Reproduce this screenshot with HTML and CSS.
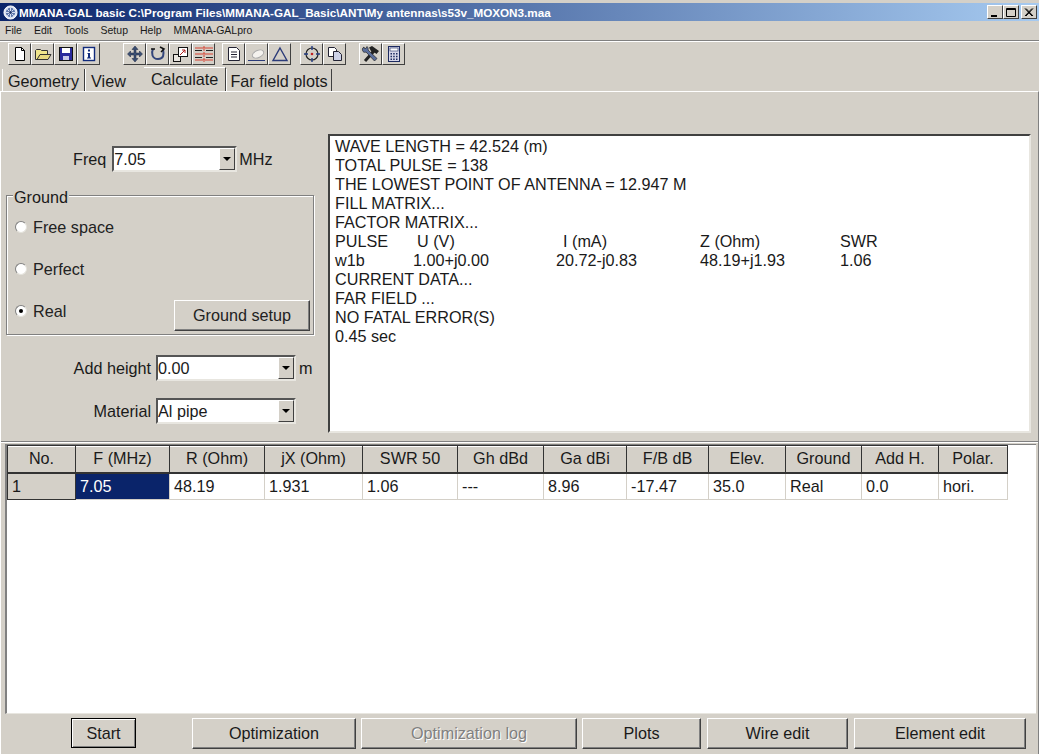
FILE: index.html
```html
<!DOCTYPE html>
<html lang="en">
<head>
<meta charset="UTF-8">
<title>MMANA-GAL basic</title>
<link rel="stylesheet" href="styles.css">
</head>
<body>
<div class="window">
    <div class="titlebar">
        <svg class="app-icon" width="15" height="15" viewBox="0 0 16 16"><circle cx="8" cy="8" r="7" fill="#dfe6f5" stroke="#fff"/><circle cx="8" cy="8" r="5" fill="#5f78ad"/><path d="M8 3v10M3 8h10M4.500 4.500l7 7M11.500 4.500l-7 7" stroke="#dfe6f5"/><circle cx="8" cy="8" r="1.500" fill="#22386e"/></svg>
        <span class="title-text">MMANA-GAL basic C:\Program Files\MMANA-GAL_Basic\ANT\My antennas\s53v_MOXON3.maa</span>
        <div class="caption-btns">
            <div class="caption-btn"><svg width="12" height="11" viewBox="0 0 12 11"><rect x="2" y="8" width="6" height="2" fill="#000"/></svg></div>
            <div class="caption-btn"><svg width="12" height="11" viewBox="0 0 12 11"><path d="M1.500 1.500h9v8h-9z M1 2.500h10" fill="none" stroke="#000"/></svg></div>
            <div class="caption-btn close"><svg width="12" height="11" viewBox="0 0 12 11"><path d="M2 1.500l7 7.500M3 1.500l7 7.500M9 1.500l-7 7.500M10 1.500l-7 7.500" fill="none" stroke="#000"/></svg></div>
        </div>
    </div>
    <div class="menubar">
        <span>File</span><span>Edit</span><span>Tools</span><span>Setup</span><span>Help</span><span>MMANA-GALpro</span>
    </div>
    <div class="toolbar">
        <div class="tool-group">
            <div class="tool"><svg width="16" height="16" viewBox="0 0 16 16"><path d="M3.500 1.500h6l3 3v10h-9z" fill="#fff" stroke="#000"/><path d="M9.500 1.500v3h3" fill="none" stroke="#000"/></svg></div>
            <div class="tool"><svg width="18" height="16" viewBox="0 0 18 16"><path d="M1.500 13.500v-9l1-1h4l1 1h6v9z" fill="#f0e68c" stroke="#333"/><path d="M3 13.500l3-5h11l-3 5z" fill="#e8da80" stroke="#333"/></svg></div>
            <div class="tool"><svg width="16" height="16" viewBox="0 0 16 16"><rect x="1.500" y="1.500" width="13" height="13" fill="#2a2a9c" stroke="#111"/><rect x="4" y="2" width="8" height="5" fill="#fff"/><rect x="5" y="10" width="6" height="4" fill="#c9c9e8"/></svg></div>
            <div class="tool"><svg width="16" height="16" viewBox="0 0 16 16"><rect x="2.500" y="1.500" width="11" height="13" fill="#fff" stroke="#102a7c" stroke-width="1.400"/><path d="M7 3.500h2v2H7zM6.500 7h2.500v4.500h1v1h-4v-1h1v-3.500h-.5z" fill="#102a7c"/></svg></div>
        </div>
        <div class="tool-group g-view">
            <div class="tool"><svg width="18" height="18" viewBox="0 0 18 18"><path d="M9 1l3 3.500h-2v3.500h3.500V6l3 3-3 3v-2H10v3.500h2L9 17l-3-3.500h2V10H4.500v2l-3-3 3-3v2H8V4.500H6z" fill="#3b4f73" stroke="#1b2540" stroke-width=".5"/></svg></div>
            <div class="tool"><svg width="18" height="16" viewBox="0 0 18 16"><path d="M4 3c-2 4-1 10 5 10s6-5 5-10" fill="none" stroke="#34467c" stroke-width="2"/><path d="M11 1l4 2-3 3" fill="none" stroke="#111" stroke-width="1.500"/><path d="M2 3h4" stroke="#111" stroke-width="1.500"/></svg></div>
            <div class="tool"><svg width="18" height="18" viewBox="0 0 18 18"><rect x="1.500" y="9.500" width="7" height="7" fill="#e8e4de" stroke="#111"/><rect x="6.500" y="2.500" width="9" height="9" fill="#fff" stroke="#111"/><path d="M8 10l5-5M10 5h3v3" fill="none" stroke="#b02020"/></svg></div>
            <div class="tool"><svg width="20" height="18" viewBox="0 0 20 18"><path d="M1 3h18M1 9h18M1 15h18" stroke="#d84030"/><path d="M1 5.500h7M12 5.500h7M1 12.500h7M12 12.500h7" stroke="#222"/><path d="M10 1v16" stroke="#d84030" stroke-dasharray="2 1"/></svg></div>
        </div>
        <div class="tool-group g-sheet">
            <div class="tool"><svg width="16" height="16" viewBox="0 0 16 16"><path d="M2.500 1.500h8l3 3v10h-11z" fill="#fff" stroke="#223"/><path d="M5 6h6M5 8.500h6M5 11h6" stroke="#223"/></svg></div>
            <div class="tool"><svg width="20" height="16" viewBox="0 0 20 16"><ellipse cx="11" cy="8" rx="6" ry="3.500" fill="#f4f2ee" stroke="#aaa" transform="rotate(-25 11 8)"/><path d="M1 14.500h17" stroke="#2a3a78"/></svg></div>
            <div class="tool"><svg width="18" height="16" viewBox="0 0 18 16"><path d="M9 2l7 12.500H2z" fill="none" stroke="#2a3a78" stroke-width="1.400"/></svg></div>
        </div>
        <div class="tool-group g-target">
            <div class="tool"><svg width="18" height="18" viewBox="0 0 18 18"><circle cx="9" cy="9" r="6" fill="none" stroke="#222" stroke-width="1.200"/><path d="M9 1v4M9 13v4M1 9h4M13 9h4" stroke="#223a80" stroke-width="1.400"/><circle cx="9" cy="9" r="1.300" fill="#c02020"/></svg></div>
            <div class="tool"><svg width="16" height="16" viewBox="0 0 16 16"><path d="M1.500 1.500h6l2 2v7h-8z" fill="#fff" stroke="#223"/><path d="M6.500 5.500h5l3 3v6h-8z" fill="#cdd2e8" stroke="#223"/></svg></div>
        </div>
        <div class="tool-group g-util">
            <div class="tool"><svg width="20" height="18" viewBox="0 0 20 18"><path d="M4 16L13 6" stroke="#222" stroke-width="3"/><path d="M8 2.500l3-1.500 7 5-2.500 3-3.500-2.500-1.500.5z" fill="#222"/><path d="M3 2c-2 1-2 3-1 4.500 1 1 2 1 3 .5l8.500 9 2.500-2.500L7 5c.5-1 0-2.500-1-3.500l-1 2-2-.5z" fill="#5c6f9c" stroke="#222" stroke-width=".7"/></svg></div>
            <div class="tool"><svg width="16" height="18" viewBox="0 0 16 18"><rect x="2.500" y="1.500" width="11" height="15" fill="#d6d6e8" stroke="#1c2a60"/><rect x="4" y="3" width="8" height="3" fill="#fff" stroke="#1c2a60" stroke-width=".6"/><path d="M4.500 8h1.500v1.500H4.500zM7.200 8h1.500v1.500H7.200zM10 8h1.500v1.500H10zM4.500 10.700h1.500v1.500H4.500zM7.200 10.700h1.500v1.500H7.200zM10 10.700h1.500v1.500H10zM4.500 13.400h1.500v1.500H4.500zM7.200 13.400h1.500v1.500H7.200zM10 13.400h1.500v1.500H10z" fill="#1c2a60"/></svg></div>
        </div>
    </div>
    <div class="tabs">
        <div class="tab">Geometry</div>
        <div class="tab view">View</div>
        <div class="tab active">Calculate</div>
        <div class="tab far">Far field plots</div>
    </div>

    <div class="page">
        <div class="top-pane">
            <div class="left-pane">
                <div class="field-row freq-row">
                    <span>Freq</span>
                    <div class="combo freq"><span class="combo-val">7.05</span><div class="combo-arrow"></div></div>
                    <span>MHz</span>
                </div>
                <div class="ground-box">
                    <div class="ground-legend">Ground</div>
                    <div class="radio-row"><span class="radio"></span>Free space</div>
                    <div class="radio-row"><span class="radio"></span>Perfect</div>
                    <div class="radio-row real"><span class="radio checked"></span>Real<div class="btn ground-btn">Ground setup</div></div>
                </div>
                <div class="field-row height-row">
                    <span class="field-label">Add height</span>
                    <div class="combo wide"><span class="combo-val">0.00</span><div class="combo-arrow"></div></div>
                    <span>m</span>
                </div>
                <div class="field-row material-row">
                    <span class="field-label">Material</span>
                    <div class="combo wide"><span class="combo-val">Al pipe</span><div class="combo-arrow"></div></div>
                </div>
            </div>
            <div class="memo">
                <div>WAVE LENGTH = 42.524 (m)</div>
                <div>TOTAL PULSE = 138</div>
                <div>THE LOWEST POINT OF ANTENNA = 12.947 M</div>
                <div>FILL MATRIX...</div>
                <div>FACTOR MATRIX...</div>
                <div class="memo-cols"><span>PULSE</span><span class="head-u">U (V)</span><span class="head-i">I (mA)</span><span>Z (Ohm)</span><span>SWR</span></div>
                <div class="memo-cols"><span>w1b</span><span>1.00+j0.00</span><span>20.72-j0.83</span><span>48.19+j1.93</span><span>1.06</span></div>
                <div>CURRENT DATA...</div>
                <div>FAR FIELD ...</div>
                <div>NO FATAL ERROR(S)</div>
                <div>0.45 sec</div>
            </div>
        </div>

        <div class="grid-wrap">
            <table class="grid">
                <colgroup>
                    <col class="c-no"><col class="c-f"><col class="c-r"><col class="c-jx"><col class="c-swr"><col class="c-gh"><col class="c-ga"><col class="c-fb"><col class="c-el"><col class="c-gr"><col class="c-add"><col class="c-pol">
                </colgroup>
                <tr>
                    <th>No.</th><th>F (MHz)</th><th>R (Ohm)</th><th>jX (Ohm)</th><th>SWR 50</th><th>Gh dBd</th><th>Ga dBi</th><th>F/B dB</th><th>Elev.</th><th>Ground</th><th>Add H.</th><th>Polar.</th>
                </tr>
                <tr>
                    <td class="row-head">1</td><td class="selected">7.05</td><td>48.19</td><td>1.931</td><td>1.06</td><td>---</td><td>8.96</td><td>-17.47</td><td>35.0</td><td>Real</td><td>0.0</td><td>hori.</td>
                </tr>
            </table>
        </div>

        <div class="bottom-bar">
            <div class="btn start">Start</div>
            <div class="btn optim">Optimization</div>
            <div class="btn optlog disabled">Optimization log</div>
            <div class="btn plots">Plots</div>
            <div class="btn wire">Wire edit</div>
            <div class="btn element">Element edit</div>
        </div>
    </div>
</div>
</body>
</html>
```

FILE: styles.css
```css
* {
    box-sizing: border-box;
}
html, body {
    margin: 0;
    padding: 0;
    height: 100%;
    overflow: hidden;
}
body {
    font-family: "Liberation Sans", Arial, sans-serif;
    font-size: 16.2px;
    color: #1a1a1a;
    background-color: #d4d0c8;
}
.window {
    width: 1039px;
    height: 754px;
    padding-top: 3px;
    display: flex;
    flex-direction: column;
}
.titlebar {
    height: 18px;
    flex: none;
    display: flex;
    align-items: center;
    padding: 0 2px 0 3px;
    background: linear-gradient(to right, #0a246a, #a6caf0);
    color: #fff;
    font-size: 11.7px;
    font-weight: bold;
}
.app-icon {
    margin-right: 1px;
}
.title-text {
    flex: 1;
    white-space: nowrap;
}
.caption-btns {
    display: flex;
}
.caption-btn {
    width: 16px;
    height: 14px;
    background-color: #d4d0c8;
    border: 1px solid;
    border-color: #fff #404040 #404040 #fff;
    display: flex;
    align-items: center;
    justify-content: center;
}
.caption-btn.close {
    margin-left: 2px;
}
.menubar {
    height: 18px;
    flex: none;
    display: flex;
    align-items: center;
    padding-left: 5px;
    gap: 12px;
    font-size: 10.5px;
}
.toolbar {
    height: 27px;
    flex: none;
    display: flex;
    align-items: center;
    padding-left: 8px;
    border-top: 1px solid #808080;
    box-shadow: inset 0 1px 0 #fff;
    margin-top: 1px;
}
.tool-group {
    display: flex;
}
.g-view {
    margin-left: 23px;
}
.g-sheet {
    margin-left: 7px;
}
.g-target {
    margin-left: 9px;
}
.g-util {
    margin-left: 13px;
}
.tool {
    width: 23px;
    height: 22px;
    display: flex;
    align-items: center;
    justify-content: center;
    border: 1px solid;
    border-color: #fff #404040 #404040 #fff;
}
.tabs {
    height: 24px;
    flex: none;
    display: flex;
    align-items: flex-end;
    padding-left: 2px;
}
.tab {
    height: 22px;
    padding: 0 5px;
    line-height: 25px;
    border-left: 1px solid #fff;
    border-right: 1px solid #404040;
    white-space: nowrap;
}
.tab.view {
    padding-right: 18px;
    border-right: 0;
}
.tab.active {
    height: 24px;
    line-height: 22px;
    padding: 0 7px;
    border-left: 0;
    border-right: 1px solid #404040;
    border-top: 1px solid #fff;
}
.tab.far {
    padding: 0 3px;
}
.page {
    flex: 1;
    display: flex;
    flex-direction: column;
    border-top: 1px solid #fff;
    border-left: 1px solid #fff;
    border-right: 1px solid #808080;
    min-height: 0;
}
.top-pane {
    height: 350px;
    flex: none;
    display: flex;
    padding: 42px 0 10px 5px;
    border-bottom: 1px solid #808080;
    box-shadow: 0 1px 0 #fff;
}
.left-pane {
    width: 322px;
    flex: none;
}
.field-row {
    display: flex;
    align-items: center;
    height: 26px;
    gap: 3px;
}
.freq-row {
    margin-top: 12px;
    padding-left: 67px;
    gap: 2px;
}
.height-row {
    margin-top: 20px;
}
.material-row {
    margin-top: 17px;
}
.field-label {
    width: 147px;
    text-align: right;
    padding-right: 2px;
}
.combo {
    height: 26px;
    background-color: #fff;
    border: 2px solid;
    border-color: #555 #e8e6e0 #e8e6e0 #555;
    display: flex;
    align-items: center;
    justify-content: space-between;
}
.combo.freq {
    width: 125px;
    margin-left: 4px;
}
.combo.wide {
    width: 140px;
}
.combo-arrow {
    width: 16px;
    height: 22px;
    background-color: #d4d0c8;
    border: 1px solid;
    border-color: #fff #404040 #404040 #fff;
    position: relative;
}
.combo-arrow::after {
    content: "";
    position: absolute;
    left: 3px;
    top: 8px;
    border-left: 4px solid transparent;
    border-right: 4px solid transparent;
    border-top: 4px solid #000;
}
.ground-box {
    width: 308px;
    height: 140px;
    margin-top: 23px;
    padding: 10px 0 0 8px;
    border: 1px solid #808080;
    box-shadow: 1px 1px 0 #fff, inset 1px 1px 0 #fff;
    position: relative;
}
.ground-legend {
    position: absolute;
    left: 6px;
    top: -8px;
    padding: 0 1px;
    background-color: #d4d0c8;
    line-height: 18px;
}
.radio-row {
    height: 42px;
    display: flex;
    align-items: center;
    gap: 6px;
    color: #222;
}
.radio-row.real {
    position: relative;
}
.radio {
    width: 12px;
    height: 12px;
    border-radius: 50%;
    background-color: #fff;
    border: 1px solid #808080;
    border-right-color: #e4e2dc;
    border-bottom-color: #e4e2dc;
    flex: none;
    position: relative;
}
.radio.checked::after {
    content: "";
    position: absolute;
    left: 3px;
    top: 3px;
    width: 4px;
    height: 4px;
    border-radius: 50%;
    background-color: #000;
}
.btn {
    height: 31px;
    display: flex;
    align-items: center;
    justify-content: center;
    background-color: #d4d0c8;
    border: 1px solid;
    border-color: #fff #404040 #404040 #fff;
    box-shadow: inset -1px -1px 0 #808080;
    white-space: nowrap;
}
.ground-btn {
    position: absolute;
    left: 159px;
    top: 10px;
    width: 136px;
}
.memo {
    width: 703px;
    height: 299px;
    padding: 1px 5px;
    background-color: #fff;
    border: 2px solid;
    border-color: #404040 #e8e6e0 #e8e6e0 #404040;
    line-height: 19px;
}
.memo-cols {
    display: grid;
    grid-template-columns: 78px 143px 144px 140px 60px;
}
.head-u {
    padding-left: 4px;
}
.head-i {
    padding-left: 7px;
}
.grid-wrap {
    flex: 1;
    min-height: 0;
    margin: 2px 2px 0 4px;
    background-color: #fff;
    border-left: 2px solid #808080;
    border-top: 1px solid #808080;
    border-bottom: 1px solid #e8e6e0;
}
.grid {
    table-layout: fixed;
    width: 1000px;
    border-collapse: collapse;
}
.c-no { width: 68px; }
.c-f { width: 94px; }
.c-r { width: 95px; }
.c-jx { width: 98px; }
.c-swr { width: 95px; }
.c-gh { width: 86px; }
.c-ga { width: 83px; }
.c-fb { width: 82px; }
.c-el { width: 77px; }
.c-gr { width: 76px; }
.c-add { width: 77px; }
.c-pol { width: 69px; }
.grid th {
    height: 27px;
    padding: 0;
    font-weight: normal;
    text-align: center;
    background-color: #d4d0c8;
    border: 1px solid #333;
    border-bottom-width: 2px;
    box-shadow: inset 0 1px 0 #fff;
}
.grid td {
    height: 27px;
    padding: 1px 0 0 4px;
    background-color: #fff;
    border: 1px solid #d4d0c8;
}
.grid td.row-head {
    background-color: #d4d0c8;
    border: 1px solid #333;
}
.grid td.selected {
    background-color: #0a246a;
    color: #fff;
}
.bottom-bar {
    height: 40px;
    flex: none;
    display: flex;
    align-items: center;
    padding: 0 0 2px 70px;
}
.start {
    width: 65px;
    height: 30px;
    border: 1px solid #000;
    box-shadow: inset 1px 1px 0 #fff, inset -1px -1px 0 #808080;
}
.optim {
    width: 164px;
    margin-left: 56px;
}
.optlog {
    width: 216px;
    margin-left: 5px;
}
.plots {
    width: 119px;
    margin-left: 5px;
}
.wire {
    width: 141px;
    margin-left: 6px;
}
.element {
    width: 172px;
    margin-left: 6px;
}
.disabled {
    color: #808080;
    text-shadow: 1px 1px 0 #fff;
}
```
